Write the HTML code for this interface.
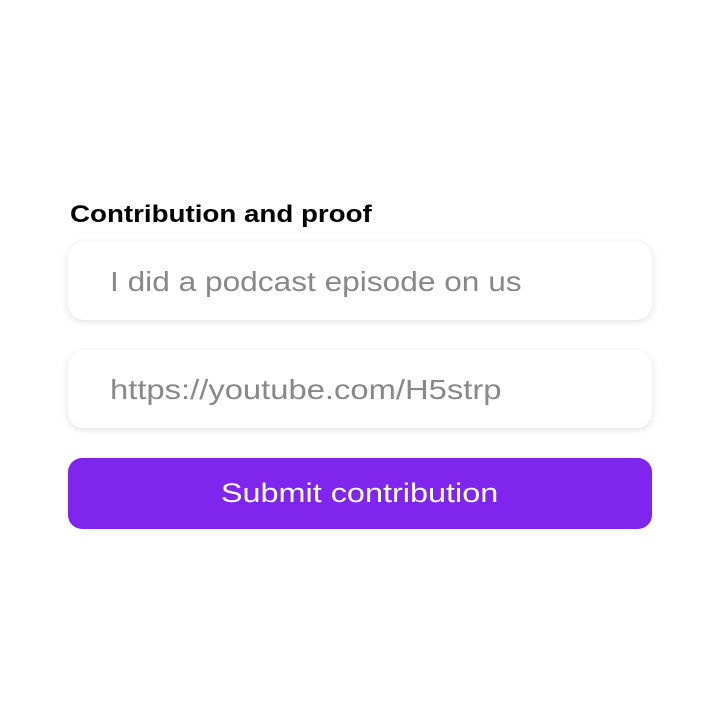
<!DOCTYPE html>
<html><head><style>
body{margin:0;width:720px;height:720px;background:#fff;font-family:"Liberation Sans",sans-serif;position:relative;overflow:hidden}
.lbl{position:absolute;left:70px;top:201px;font-size:24px;font-weight:bold;color:#000;transform:scaleX(1.155);transform-origin:left}
.in{position:absolute;left:68px;width:584px;height:78px;border-radius:16px;background:#fff;box-shadow:0 2px 8px rgba(0,0,0,0.12);box-sizing:border-box;padding-left:42px;line-height:80px;font-size:28px;color:#888}
.in span{display:inline-block;transform-origin:left}
.btn{position:absolute;left:68px;top:458px;width:584px;height:71px;border-radius:14px;background:#8025EE;color:#fff;text-align:center;line-height:71px;font-size:27px}
.btn span{display:inline-block;transform:scaleX(1.2)}
</style></head><body>
<div class="lbl">Contribution and proof</div>
<div class="in" style="top:242px"><span style="transform:scaleX(1.13)">I did a podcast episode on us</span></div>
<div class="in" style="top:350px"><span style="transform:scaleX(1.17)">https://youtube.com/H5strp</span></div>
<div class="btn"><span>Submit contribution</span></div>
</body></html>
